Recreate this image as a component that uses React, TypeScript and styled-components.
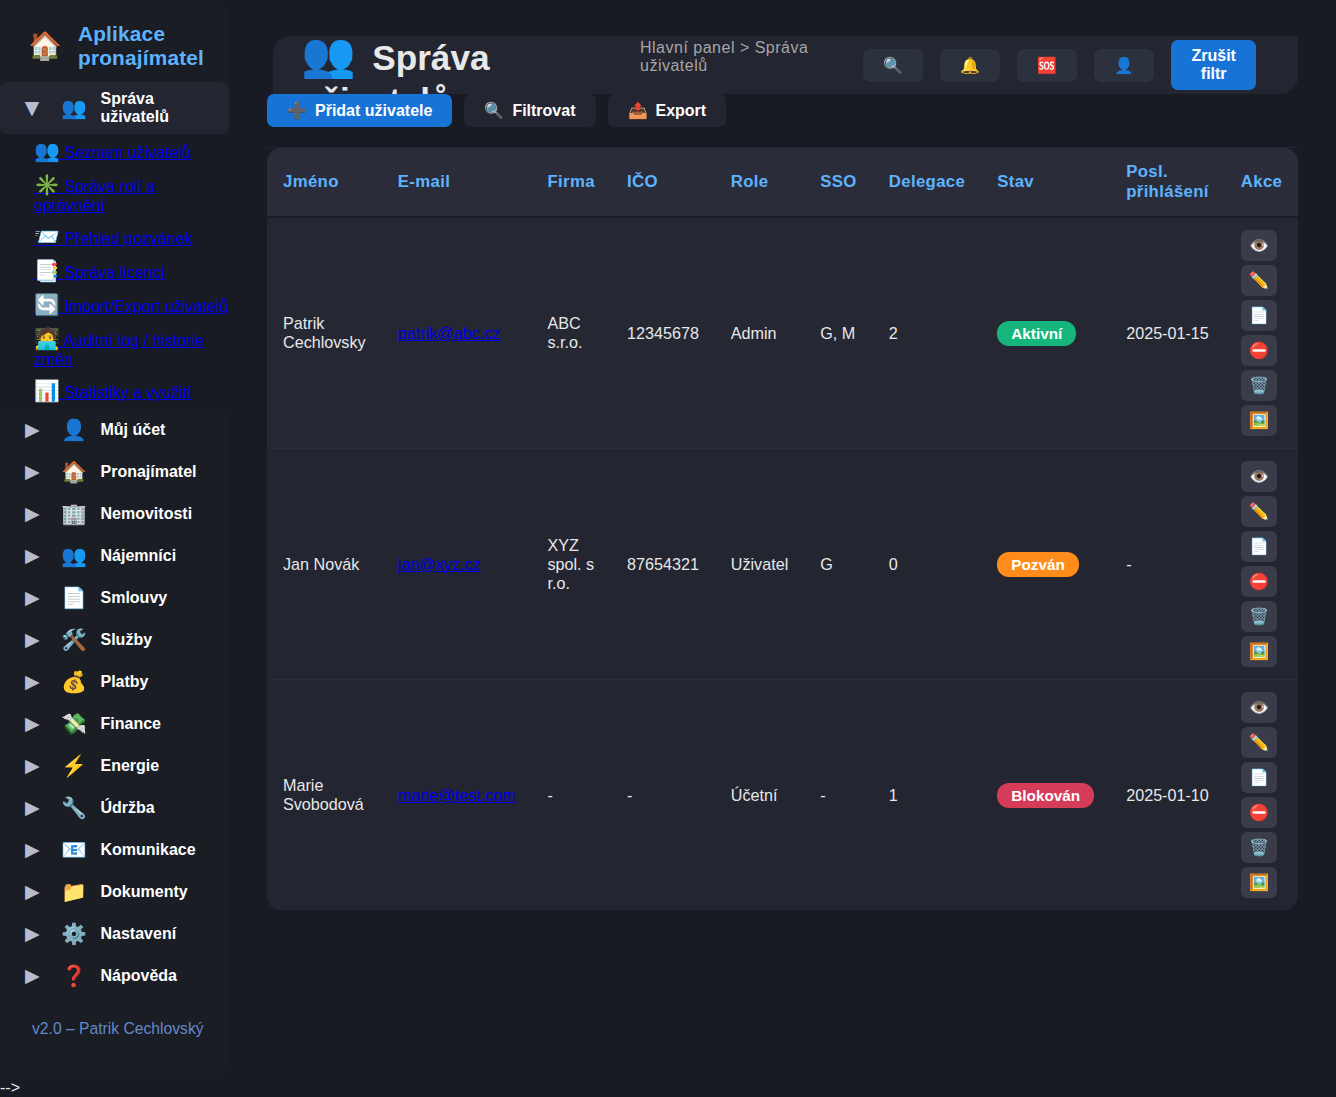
import React from 'react';
import styled, { createGlobalStyle } from 'styled-components';

const GlobalStyle = createGlobalStyle`
  * { box-sizing: border-box; }
  body {
    margin: 0;
    background: #181b23;
    color: #e8e8e8;
    font-family: "Liberation Sans", Arial, sans-serif;
    font-size: 16px;
  }
  button { font-family: inherit; cursor: pointer; }
`;

const Layout = styled.div`
  display: flex;
  height: 1078px;
`;

const Sidebar = styled.aside`
  width: 229px;
  flex: none;
  display: flex;
  flex-direction: column;
  background: #1a1d24;
  border-radius: 0 18px 18px 0;
`;

const Brand = styled.div`
  display: flex;
  align-items: center;
  height: 82px;
  padding: 10px 0 0 28px;
  gap: 15px;
  color: #5eb3ff;
  font-size: 20.8px;
  line-height: 24px;
  font-weight: bold;
  letter-spacing: 0.2px;
`;

const BrandIcon = styled.span`
  width: 35px;
  font-size: 27.2px;
  line-height: 34px;
  letter-spacing: 0;
`;

const MenuItem = styled.div<{ $open?: boolean }>`
  display: flex;
  align-items: center;
  flex: none;
  height: ${p => (p.$open ? 52 : 42)}px;
  padding-left: 24px;
  border-radius: 8px;
  background: ${p => (p.$open ? '#232531' : 'transparent')};
  color: #fff;
  font-weight: bold;
  line-height: 18px;
`;

const Arrow = styled.span<{ $open?: boolean }>`
  width: 17px;
  height: 22px;
  margin-right: 20px;
  color: #b5bccf;
  font-size: 19.2px;
  font-weight: normal;
  line-height: 22px;
  text-align: center;
  transform: ${p => (p.$open ? 'translateY(1px) rotate(90deg)' : 'none')};
`;

const MenuIcon = styled.span`
  width: 26px;
  margin-right: 13.5px;
  font-size: 20.8px;
  font-weight: normal;
  line-height: 24px;
`;

const MenuLabel = styled.span`
  width: 100px;
`;

const SubMenu = styled.ul`
  list-style: none;
  margin: 0;
  padding: 5px 0 0 34px;
  height: 275px;
  background: #181b23;
`;

const SubItem = styled.li`
  padding-bottom: 10px;
  line-height: 18px;
  a { color: #0000ee; }
`;

const SubIcon = styled.span`
  font-size: 20.8px;
  line-height: 24px;
`;

const Version = styled.div`
  padding: 23px 0 0 32px;
  color: #6488c9;
  font-size: 15.68px;
`;

const Main = styled.main`
  flex: 1;
  min-width: 0;
  padding: 36px 38px 0;
`;

const Header = styled.header`
  display: flex;
  height: 58px;
  margin-left: 6px;
  padding: 0 42px 0 28px;
  overflow: hidden;
  background: #232531;
  border-radius: 18px 0 18px 0;
`;

const Title = styled.h1`
  width: 339px;
  flex: none;
  margin: -2px 0 0;
  padding-right: 100px;
  font-size: 35.2px;
  line-height: 43px;
`;

const TitleIcon = styled.span`
  display: inline-block;
  width: 54px;
  margin-right: 7.4px;
  font-size: 44px;
  font-weight: normal;
  line-height: 42px;
`;

const Breadcrumb = styled.div`
  width: 223px;
  flex: none;
  padding-top: 3px;
  color: #a6a6a6;
  line-height: 18px;
  letter-spacing: 0.5px;
  padding-right: 40px;
`;

const HeaderTools = styled.div`
  display: flex;
  align-items: center;
  gap: 17px;
`;

const IconButton = styled.button`
  width: 60px;
  height: 33px;
  padding: 2px 0 0 0.5px;
  border: 0;
  border-radius: 7px;
  background: #2b323d;
  font-size: 16px;
  line-height: 18px;
`;

const ResetButton = styled.button`
  width: 85px;
  height: 50px;
  padding: 0 19.8px 0 20.2px;
  border: 0;
  border-radius: 7px;
  background: #1873d6;
  color: #fff;
  font-size: 16px;
  font-weight: bold;
  line-height: 18px;
`;

const Toolbar = styled.div`
  display: flex;
  gap: 12px;
  height: 54px;
  align-items: flex-start;
  border-bottom: 1px solid #232531;
`;

const ToolButton = styled.button<{ $primary?: boolean }>`
  display: flex;
  align-items: center;
  gap: 8px;
  height: 33px;
  padding: 0 20px;
  border: 0;
  border-radius: 7px;
  background: ${p => (p.$primary ? '#1873d6' : '#232531')};
  color: #fff;
  font-size: 16px;
  font-weight: bold;
  line-height: 18px;
  white-space: nowrap;
`;

const Table = styled.table`
  width: 1031px;
  table-layout: fixed;
  border-collapse: separate;
  border-spacing: 0;
  overflow: hidden;
  border-radius: 14px;
  background: #232531;
`;

const Th = styled.th`
  height: 70px;
  padding: 0 16px;
  border-bottom: 2px solid #1a1d26;
  background: #2a2d39;
  color: #5eb3ff;
  font-size: 16.8px;
  line-height: 20px;
  letter-spacing: 0.336px;
  text-align: left;
`;

const Row = styled.tr<{ $last?: boolean; $shade?: boolean }>`
  background: ${p => (p.$shade ? '#252733' : '#232531')};
  td { border-bottom: ${p => (p.$last ? '0' : '1px solid #2a2d39')}; }
`;

const Td = styled.td<{ $nowrap?: boolean }>`
  padding: 12px 16px;
  font-size: 16.16px;
  line-height: 19px;
  vertical-align: middle;
  white-space: ${p => (p.$nowrap ? 'nowrap' : 'normal')};
  a { color: #0000ee; }
`;

const Badge = styled.span<{ $color: string }>`
  display: inline-block;
  height: 25px;
  padding: 0 14px;
  border-radius: 12px;
  background: ${p => p.$color};
  color: #fff;
  font-size: 15.35px;
  font-weight: bold;
  line-height: 25px;
  vertical-align: middle;
`;

const Actions = styled.div`
  display: flex;
  flex-direction: column;
  gap: 4px;
`;

const ActionButton = styled.button`
  width: 36px;
  height: 31px;
  padding: 0;
  border: 0;
  border-radius: 6px;
  background: #3a3d49;
  font-size: 16.16px;
  line-height: 19px;
`;

const Stray = styled.div`
  height: 19px;
  padding-top: 1px;
  line-height: 18px;
`;

const subItems = [
  ['👥', 'Seznam uživatelů'],
  ['✳️', 'Správa rolí a oprávnění'],
  ['📨', 'Přehled pozvánek'],
  ['📑', 'Správa licencí'],
  ['🔄', 'Import/Export uživatelů'],
  ['🧑‍💻', 'Auditní log / historie změn'],
  ['📊', 'Statistiky a využití'],
];

const menu = [
  ['👤', 'Můj účet'],
  ['🏠', 'Pronajímatel'],
  ['🏢', 'Nemovitosti'],
  ['👥', 'Nájemníci'],
  ['📄', 'Smlouvy'],
  ['🛠️', 'Služby'],
  ['💰', 'Platby'],
  ['💸', 'Finance'],
  ['⚡', 'Energie'],
  ['🔧', 'Údržba'],
  ['📧', 'Komunikace'],
  ['📁', 'Dokumenty'],
  ['⚙️', 'Nastavení'],
  ['❓', 'Nápověda'],
];

const columns: [string, number][] = [
  ['Jméno', 114.8],
  ['E-mail', 149.7],
  ['Firma', 79.5],
  ['IČO', 103.8],
  ['Role', 89.5],
  ['SSO', 68.5],
  ['Delegace', 108.4],
  ['Stav', 129],
  ['Posl. přihlášení', 114.6],
  ['Akce', 73.2],
];

const users = [
  { name: 'Patrik Cechlovsky', email: 'patrik@abc.cz', firm: 'ABC s.r.o.', ico: '12345678', role: 'Admin', sso: 'G, M', delegations: '2', state: 'Aktivní', color: '#16b57b', last: '2025-01-15' },
  { name: 'Jan Novák', email: 'jan@xyz.cz', firm: 'XYZ spol. s r.o.', ico: '87654321', role: 'Uživatel', sso: 'G', delegations: '0', state: 'Pozván', color: '#ff8c1a', last: '-' },
  { name: 'Marie Svobodová', email: 'marie@test.com', firm: '-', ico: '-', role: 'Účetní', sso: '-', delegations: '1', state: 'Blokován', color: '#d43c57', last: '2025-01-10' },
];

const actions = ['👁️', '✏️', '📄', '⛔', '🗑️', '🖼️'];

export default function App() {
  return (
    <>
      <GlobalStyle />
      <Layout>
        <Sidebar>
          <Brand>
            <BrandIcon>🏠</BrandIcon>
            <span>Aplikace<br />pronajímatel</span>
          </Brand>
          <MenuItem $open>
            <Arrow $open>▶</Arrow>
            <MenuIcon>👥</MenuIcon>
            <MenuLabel>Správa uživatelů</MenuLabel>
          </MenuItem>
          <SubMenu>
            {subItems.map(([icon, label]) => (
              <SubItem key={label}>
                <a href="#"><SubIcon>{icon}</SubIcon> {label}</a>
              </SubItem>
            ))}
          </SubMenu>
          {menu.map(([icon, label]) => (
            <MenuItem key={label}>
              <Arrow>▶</Arrow>
              <MenuIcon>{icon}</MenuIcon>
              <MenuLabel>{label}</MenuLabel>
            </MenuItem>
          ))}
          <Version>v2.0 – Patrik Cechlovský</Version>
        </Sidebar>
        <Main>
          <Header>
            <Title><TitleIcon>👥</TitleIcon> Správa uživatelů</Title>
            <Breadcrumb>Hlavní panel &gt; Správa uživatelů</Breadcrumb>
            <HeaderTools>
              {['🔍', '🔔', '🆘', '👤'].map(icon => <IconButton key={icon}>{icon}</IconButton>)}
              <ResetButton>Zrušit filtr</ResetButton>
            </HeaderTools>
          </Header>
          <Toolbar>
            <ToolButton $primary><span>➕</span>Přidat uživatele</ToolButton>
            <ToolButton><span>🔍</span>Filtrovat</ToolButton>
            <ToolButton><span>📤</span>Export</ToolButton>
          </Toolbar>
          <Table>
            <colgroup>
              {columns.map(([name, width]) => <col key={name} style={{ width }} />)}
            </colgroup>
            <thead>
              <tr>{columns.map(([name]) => <Th key={name}>{name}</Th>)}</tr>
            </thead>
            <tbody>
              {users.map((u, i) => (
                <Row key={u.email} $shade={i === 0} $last={i === users.length - 1}>
                  <Td>{u.name}</Td>
                  <Td><a href="#">{u.email}</a></Td>
                  <Td>{u.firm}</Td>
                  <Td>{u.ico}</Td>
                  <Td>{u.role}</Td>
                  <Td>{u.sso}</Td>
                  <Td>{u.delegations}</Td>
                  <Td><Badge $color={u.color}>{u.state}</Badge></Td>
                  <Td $nowrap>{u.last}</Td>
                  <Td>
                    <Actions>
                      {actions.map(a => <ActionButton key={a}>{a}</ActionButton>)}
                    </Actions>
                  </Td>
                </Row>
              ))}
            </tbody>
          </Table>
        </Main>
      </Layout>
      <Stray>--&gt;</Stray>
    </>
  );
}
